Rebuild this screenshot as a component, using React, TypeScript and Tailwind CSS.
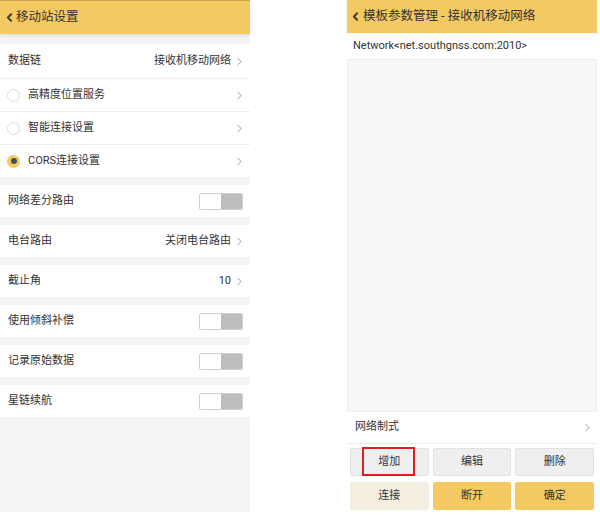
import { ChevronLeft, ChevronRight } from "lucide-react";

const font = { fontFamily: 'Roboto, "Noto Sans CJK SC", sans-serif' };

function Radio({ checked }: { checked?: boolean }) {
  return checked ? (
    <span className="w-[13px] h-[13px] rounded-full bg-[#f5c85f] flex items-center justify-center shrink-0">
      <span className="w-[6px] h-[6px] rounded-full bg-[#4a4a5a]" />
    </span>
  ) : (
    <span className="w-[13px] h-[13px] rounded-full border border-[#dcdcdc] bg-white shrink-0" />
  );
}

function Toggle() {
  return (
    <div className="flex w-[44px] h-[17px] border border-[#cfcfcf] rounded-[2px] overflow-hidden">
      <div className="flex-1 bg-white" />
      <div className="flex-1 bg-[#bdbdbd]" />
    </div>
  );
}

function Arrow() {
  return <ChevronRight className="w-[13px] h-[13px] text-[#8a8a8a] shrink-0 -mr-[3px]" strokeWidth={1.6} />;
}

function Row({ label, value, arrow, toggle, h = "h-[32px]" }: { label: string; value?: string; arrow?: boolean; toggle?: boolean; h?: string }) {
  return (
    <div className={`${h} bg-white flex items-center pl-[8px] pr-[7px]`}>
      <span className="text-[11px] text-[#333]">{label}</span>
      <div className="ml-auto flex items-center gap-[2px]">
        {value && <span className="text-[11px] text-[#333]">{value}</span>}
        {arrow && <Arrow />}
        {toggle && <Toggle />}
      </div>
    </div>
  );
}

function RadioRow({ label, checked }: { label: string; checked?: boolean }) {
  return (
    <div className="h-[33px] bg-white flex items-center pl-[7px] pr-[7px] border-t border-[#eeeeee]">
      <Radio checked={checked} />
      <span className="text-[11px] text-[#333] ml-[8px]">{label}</span>
      <div className="ml-auto">
        <Arrow />
      </div>
    </div>
  );
}

function LeftPanel() {
  return (
    <div className="w-[250px] h-[512px] bg-[#f4f4f4] flex flex-col">
      <div className="h-[34px] bg-[#f5c962] border-t border-[#c9a650] flex items-center pl-[3px] shadow-[0_2px_3px_rgba(0,0,0,0.08)]">
        <ChevronLeft className="w-[13px] h-[13px] text-[#3a3a3a]" strokeWidth={3.5} />
        <span className="text-[12.5px] text-[#333]">移动站设置</span>
      </div>
      <div className="h-[10px]" />
      <Row label="数据链" value="接收机移动网络" arrow h="h-[34px]" />
      <RadioRow label="高精度位置服务" />
      <RadioRow label="智能连接设置" />
      <RadioRow label="CORS连接设置" checked />
      <div className="flex flex-col gap-[8px] pt-[8px]">
        <Row label="网络差分路由" toggle />
        <Row label="电台路由" value="关闭电台路由" arrow />
        <Row label="截止角" value="10" arrow />
        <Row label="使用倾斜补偿" toggle />
        <Row label="记录原始数据" toggle />
        <Row label="星链续航" toggle />
      </div>
    </div>
  );
}

function Btn({ label, tone, boxed }: { label: string; tone: "gray" | "beige" | "yellow"; boxed?: boolean }) {
  const bg =
    tone === "gray"
      ? "bg-[#efefef] border border-[#e2e2e2]"
      : tone === "beige"
      ? "bg-[#f3eee0]"
      : "bg-[#f5c962]";
  return (
    <div className={`flex-1 h-[28px] rounded-[2px] flex items-center justify-center relative ${bg}`}>
      {boxed && <div className="absolute left-[11px] right-[13px] top-[-2px] bottom-[-1px] border-2 border-[#e02020]" />}
      <span className="text-[11px] text-[#333] relative">{label}</span>
    </div>
  );
}

function RightPanel() {
  return (
    <div className="w-[250px] h-[512px] flex flex-col bg-white">
      <div className="h-[33px] bg-[#f5c962] flex items-center pl-[2px] shadow-[0_2px_3px_rgba(0,0,0,0.08)]">
        <ChevronLeft className="w-[13px] h-[13px] text-[#3a3a3a]" strokeWidth={3.5} />
        <span className="text-[12.5px] text-[#333] ml-[1px]">模板参数管理 - 接收机移动网络</span>
      </div>
      <div className="h-[27px] bg-white flex items-center pl-[6px] border-b border-[#ececec]">
        <span className="text-[11px] text-[#333]">Network&lt;net.southgnss.com:2010&gt;</span>
      </div>
      <div className="flex-1 bg-[#f7f7f7] border-x border-[#eeeeee]" />
      <div className="h-[33px] bg-white flex items-center pl-[8px] pr-[6px] border-t border-b border-[#eeeeee]">
        <span className="text-[11px] text-[#333]">网络制式</span>
        <div className="ml-auto">
          <Arrow />
        </div>
      </div>
      <div className="flex flex-col gap-[6px] px-[3px] pt-[4px] pb-[2px]">
        <div className="flex gap-[4px]">
          <Btn label="增加" tone="gray" boxed />
          <Btn label="编辑" tone="gray" />
          <Btn label="删除" tone="gray" />
        </div>
        <div className="flex gap-[4px]">
          <Btn label="连接" tone="beige" />
          <Btn label="断开" tone="yellow" />
          <Btn label="确定" tone="yellow" />
        </div>
      </div>
    </div>
  );
}

export default function App() {
  return (
    <div className="w-[600px] h-[515px] bg-white flex" style={font}>
      <LeftPanel />
      <div className="w-[97px]" />
      <RightPanel />
    </div>
  );
}
